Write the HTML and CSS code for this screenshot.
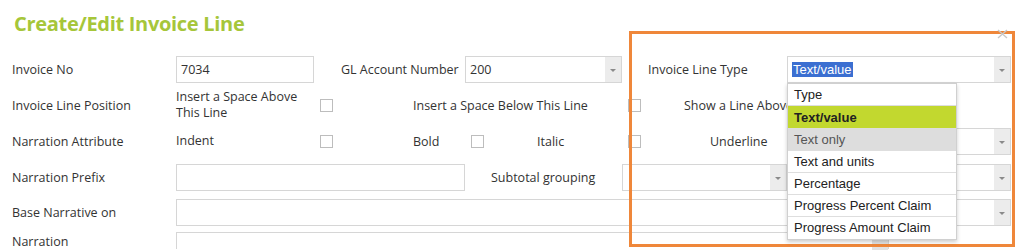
FILE: index.html
```html
<!DOCTYPE html>
<html>
<head>
<meta charset="utf-8">
<link rel="stylesheet" href="styles.css">
</head>
<body>
<div class="page">
  <h1 class="title">Create/Edit Invoice Line</h1>
  <div class="form">
    <div class="row r1">
      <span class="lbl">Invoice No</span>
      <div class="input w-inv">7034</div>
      <span class="lbl2 gl">GL Account Number</span>
      <div class="select w-gl"><span class="val">200</span><span class="arrow"></span></div>
      <span class="lbl2 type">Invoice Line Type</span>
      <div class="select w-type"><span class="val"><span class="hl">Text/value</span></span><span class="arrow"></span></div>
    </div>
    <div class="row r2">
      <span class="lbl">Invoice Line Position</span>
      <span class="opt w-above">Insert a Space Above This Line</span>
      <span class="cb"></span>
      <span class="opt w-below">Insert a Space Below This Line</span>
      <span class="cb"></span>
      <span class="opt w-show">Show a Line Above</span>
    </div>
    <div class="row r3">
      <span class="lbl">Narration Attribute</span>
      <span class="opt w-above">Indent</span>
      <span class="cb"></span>
      <span class="opt w-bold">Bold</span>
      <span class="cb"></span>
      <span class="opt w-italic">Italic</span>
      <span class="cb"></span>
      <span class="opt w-under">Underline</span>
      <div class="select w-type"><span class="val"></span><span class="arrow"></span></div>
    </div>
    <div class="row r4">
      <span class="lbl">Narration Prefix</span>
      <div class="input w-prefix"></div>
      <span class="lbl2 sub">Subtotal grouping</span>
      <div class="select w-sub"><span class="val"></span><span class="arrow"></span></div>
      <div class="select w-type"><span class="val"></span><span class="arrow"></span></div>
    </div>
    <div class="row r5">
      <span class="lbl">Base Narrative on</span>
      <div class="select w-base"><span class="val"></span><span class="arrow"></span></div>
    </div>
    <div class="row r6">
      <span class="lbl">Narration</span>
      <div class="input w-narr"><span class="scroll"></span></div>
    </div>
  </div>

  <div class="highlight-box"></div>
  <svg class="close" width="11" height="10" viewBox="0 0 11 10"><path d="M1 1 L10 9 M10 1 L1 9" stroke="#c8c8c8" stroke-width="1.4" fill="none"/></svg>

  <ul class="menu">
    <li>Type</li>
    <li class="active">Text/value</li>
    <li class="hover">Text only</li>
    <li>Text and units</li>
    <li>Percentage</li>
    <li>Progress Percent Claim</li>
    <li>Progress Amount Claim</li>
  </ul>
</div>
</body>
</html>
```

FILE: styles.css
```css
* { box-sizing: border-box; }
html, body { margin: 0; padding: 0; background: #fff; }
body {
  font-family: "Open Sans", "Noto Sans", sans-serif;
  font-size: 12.5px;
  color: #333;
  width: 1024px;
  height: 250px;
  overflow: hidden;
}
.page { position: relative; padding-left: 12px; height: 250px; overflow: hidden; }

.title {
  margin: 0 0 18px 2px;
  padding-top: 10px;
  font-size: 20px;
  line-height: 28px;
  font-weight: 700;
  color: #a6c63a;
  letter-spacing: -0.3px;
}

.form { display: flex; flex-direction: column; gap: 8px; }
.row { display: flex; align-items: center; height: 28px; }
.r1 { height: 27px; }
.r5 { height: 27px; }
.r6 { margin-top: -2px; height: 17px; align-items: flex-start; }
.r6 .lbl { line-height: 20px; }

.lbl { width: 164px; flex: none; white-space: nowrap; }
.lbl2 { flex: none; white-space: nowrap; }
.gl { margin-left: 27px; width: 124px; }
.type { margin-left: 26px; width: 139px; }
.sub { margin-left: 26px; width: 131px; }

.input, .select {
  flex: none;
  height: 27px;
  border: 1px solid #d6d6d6;
  background: #fff;
  display: flex;
  align-items: center;
}
.input { padding-left: 4px; }
.select .val { flex: 1; padding-left: 4px; white-space: nowrap; }
.select .arrow {
  width: 16px;
  align-self: stretch;
  background: #ececec;
  position: relative;
}
.select .arrow::after {
  content: "";
  position: absolute;
  left: 5px;
  top: 12px;
  border-left: 3px solid transparent;
  border-right: 3px solid transparent;
  border-top: 3px solid #8a8a8a;
}
.hl {
  background: #3b6fd1;
  color: #fff;
  font-family: "Liberation Sans", Arial, sans-serif;
  font-size: 13px;
  padding: 0 1px;
}

.w-inv { width: 138px; }
.w-gl { width: 157px; }
.w-type { width: 224px; }
.w-prefix { width: 289px; }
.w-sub { width: 165px; }
.r4 .w-type { margin-left: 14px; width: 210px; }
.w-base { width: 835px; }
.w-narr { width: 713px; height: 17px; border-bottom: none; align-items: flex-start; justify-content: flex-end; padding-top: 6px; }
.scroll { width: 16px; height: 11px; background: #e2e2e2; }

.opt { flex: none; white-space: nowrap; }
.w-above { width: 144px; white-space: normal; line-height: 16px; }
.cb {
  flex: none;
  width: 13px;
  height: 13px;
  border: 1px solid #bdbdbd;
  background: #fff;
}
.w-below { margin-left: 80px; width: 215px; }
.w-show { margin-left: 43px; }
.w-bold { margin-left: 80px; width: 58px; }
.w-italic { margin-left: 53px; width: 91px; }
.w-under { margin-left: 69px; width: 77px; }
.r3 .w-type { width: 224px; }

.highlight-box {
  position: absolute;
  left: 629px;
  top: 31px;
  width: 386px;
  height: 216px;
  border: 3px solid #ef873a;
  pointer-events: none;
}
.close { position: absolute; left: 997px; top: 29px; }

.menu {
  position: absolute;
  left: 787px;
  top: 83px;
  width: 170px;
  margin: 0;
  padding: 0;
  list-style: none;
  background: #fff;
  border: 1px solid #d0d0d0;
  box-shadow: 0 2px 4px rgba(0,0,0,0.2);
  font-family: "Liberation Sans", Arial, sans-serif;
  font-size: 13px;
  color: #222;
}
.menu li {
  height: 22px;
  line-height: 21px;
  padding-left: 6px;
  border-bottom: 1px solid #dedede;
  white-space: nowrap;
}
.menu li:last-child { border-bottom: none; }
.menu li.active { background: #c2d82f; font-weight: 700; height: 23px; line-height: 23px; }
.menu li.hover { background: #dddddd; color: #555; }
```
